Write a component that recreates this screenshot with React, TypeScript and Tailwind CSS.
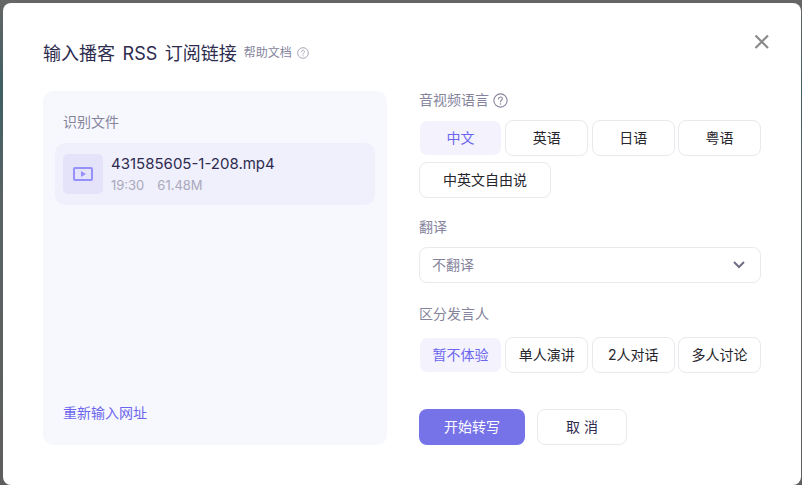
import React from "react";

const font = { fontFamily: '"Inter","Noto Sans CJK SC",sans-serif' };

function Help({ size, color }: { size: number; color: string }) {
  return (
    <svg width={size} height={size} viewBox="0 0 14 14" fill="none" stroke={color} strokeWidth="1">
      <circle cx="7" cy="7" r="6.2" />
      <path d="M5.2 5.500c0-1 .8-1.700 1.800-1.700s1.800.7 1.800 1.600c0 1.300-1.800 1.400-1.800 2.800" strokeLinecap="round" />
      <circle cx="7" cy="10.200" r=".7" fill={color} stroke="none" />
    </svg>
  );
}

function Opt({ label, active, w }: { label: string; active?: boolean; w: string }) {
  return (
    <div
      className={
        "h-[36px] shrink-0 flex items-center justify-center rounded-[8px] text-[14px] pb-[2px] border " +
        w +
        (active
          ? " border-white bg-[#f3f2fd] bg-clip-padding text-[#6c66ee]"
          : " border-[#e9e9ee] bg-white text-[#26262c]")
      }
    >
      {label}
    </div>
  );
}

export default function App() {
  return (
    <div
      className="w-[802px] h-[485px] overflow-hidden bg-[linear-gradient(180deg,#666666_0%,#3f5f63_18%,#586264_40%,#5c6162_65%,#5e5e5e_100%)] pt-[3px] pl-[3px] pr-[1px]"
      style={font}
    >
      <div className="relative h-[482px] bg-white rounded-[8px] pl-[40px]">
        <div className="h-[88px] flex items-start pt-[39px]">
          <h1 className="text-[18px] leading-[24px] text-[#2d2b4e] font-normal [word-spacing:2.5px]">输入播客 RSS 订阅链接</h1>
          <span className="ml-[7px] mt-[2px] text-[12px] leading-[18px] text-[#85849c]">帮助文档</span>
          <span className="ml-[5px] mt-[5px]">
            <Help size={12} color="#9a99ad" />
          </span>
        </div>
        <button className="absolute right-[31px] top-[31px] w-[16px] h-[16px]" aria-label="关闭">
          <svg width="16" height="16" viewBox="0 0 16 16" fill="none" stroke="#8a8a8a" strokeWidth="2.2">
            <path d="M1.500 1.500l12.500 12.500M14 1.500l-12.500 12.500" />
          </svg>
        </button>
        <div className="flex">
          <div className="w-[344px] h-[354px] rounded-[10px] bg-[#f7f8fd] px-[12px] flex flex-col">
            <div className="pl-[8px] pt-[22px] text-[14px] leading-[18px] text-[#85849c]">识别文件</div>
            <div className="mt-[12px] h-[62px] rounded-[10px] bg-[#f0effc] flex items-center pl-[8px]">
              <div className="w-[40px] h-[40px] rounded-[5px] bg-[#e5e3fa] flex items-center justify-center">
                <svg className="mb-[1px]" width="20" height="14" viewBox="0 0 20 14" fill="none">
                  <rect x="1" y="1" width="18" height="12" rx="1" stroke="#9690fb" strokeWidth="2" />
                  <path d="M8 4l5 3-5 3z" fill="#9690fb" />
                </svg>
              </div>
              <div className="ml-[8px]">
                <div className="text-[15px] leading-[20px] text-[#2d2b4e]">431585605-1-208.mp4</div>
                <div className="mt-[2px] text-[13px] leading-[18px] text-[#aaa9bb] flex gap-[13px]">
                  <span>19:30</span>
                  <span>61.48M</span>
                </div>
              </div>
            </div>
            <div className="mt-auto pb-[22px] pl-[8px] text-[14px] leading-[20px] text-[#6c66ee]">重新输入网址</div>
          </div>
          <div className="ml-[32px] w-[342px]">
            <div className="flex items-center h-[18px] text-[14px] text-[#85849c]">
              <span className="pb-[2px]">音视频语言</span>
              <span className="ml-[4px] flex">
                <Help size={15} color="#85849c" />
              </span>
            </div>
            <div className="mt-[11px] flex flex-wrap gap-x-[3.33px] gap-y-[6px]">
              <Opt label="中文" active w="w-[83px]" />
              <Opt label="英语" w="w-[83px]" />
              <Opt label="日语" w="w-[83px]" />
              <Opt label="粤语" w="w-[83px]" />
              <Opt label="中英文自由说" w="w-[132px]" />
            </div>
            <div className="mt-[20px] text-[14px] leading-[18px] text-[#85849c]">翻译</div>
            <div className="mt-[11px] h-[36px] rounded-[8px] border border-[#e9e9ee] flex items-center justify-between pl-[12px] pr-[15px] text-[14px] text-[#85849c]">
              <span className="pb-[2px]">不翻译</span>
              <svg width="12" height="8" viewBox="0 0 12 8" fill="none" stroke="#6f6e85" strokeWidth="2">
                <path d="M1 1l5 5 5-5" />
              </svg>
            </div>
            <div className="mt-[22px] text-[14px] leading-[18px] text-[#85849c]">区分发言人</div>
            <div className="mt-[14px] flex gap-x-[3.33px]">
              <Opt label="暂不体验" active w="w-[83px]" />
              <Opt label="单人演讲" w="w-[83px]" />
              <Opt label="2人对话" w="w-[83px]" />
              <Opt label="多人讨论" w="w-[83px]" />
            </div>
            <div className="mt-[36px] flex gap-[12px]">
              <button className="w-[106px] h-[36px] rounded-[8px] bg-[#7672e8] text-white text-[14px] pb-[2px]">开始转写</button>
              <button className="w-[90px] h-[36px] rounded-[8px] border border-[#e9e9ee] bg-white text-[#2d2b4e] text-[14px] pb-[2px]">取 消</button>
            </div>
          </div>
        </div>
      </div>
    </div>
  );
}
